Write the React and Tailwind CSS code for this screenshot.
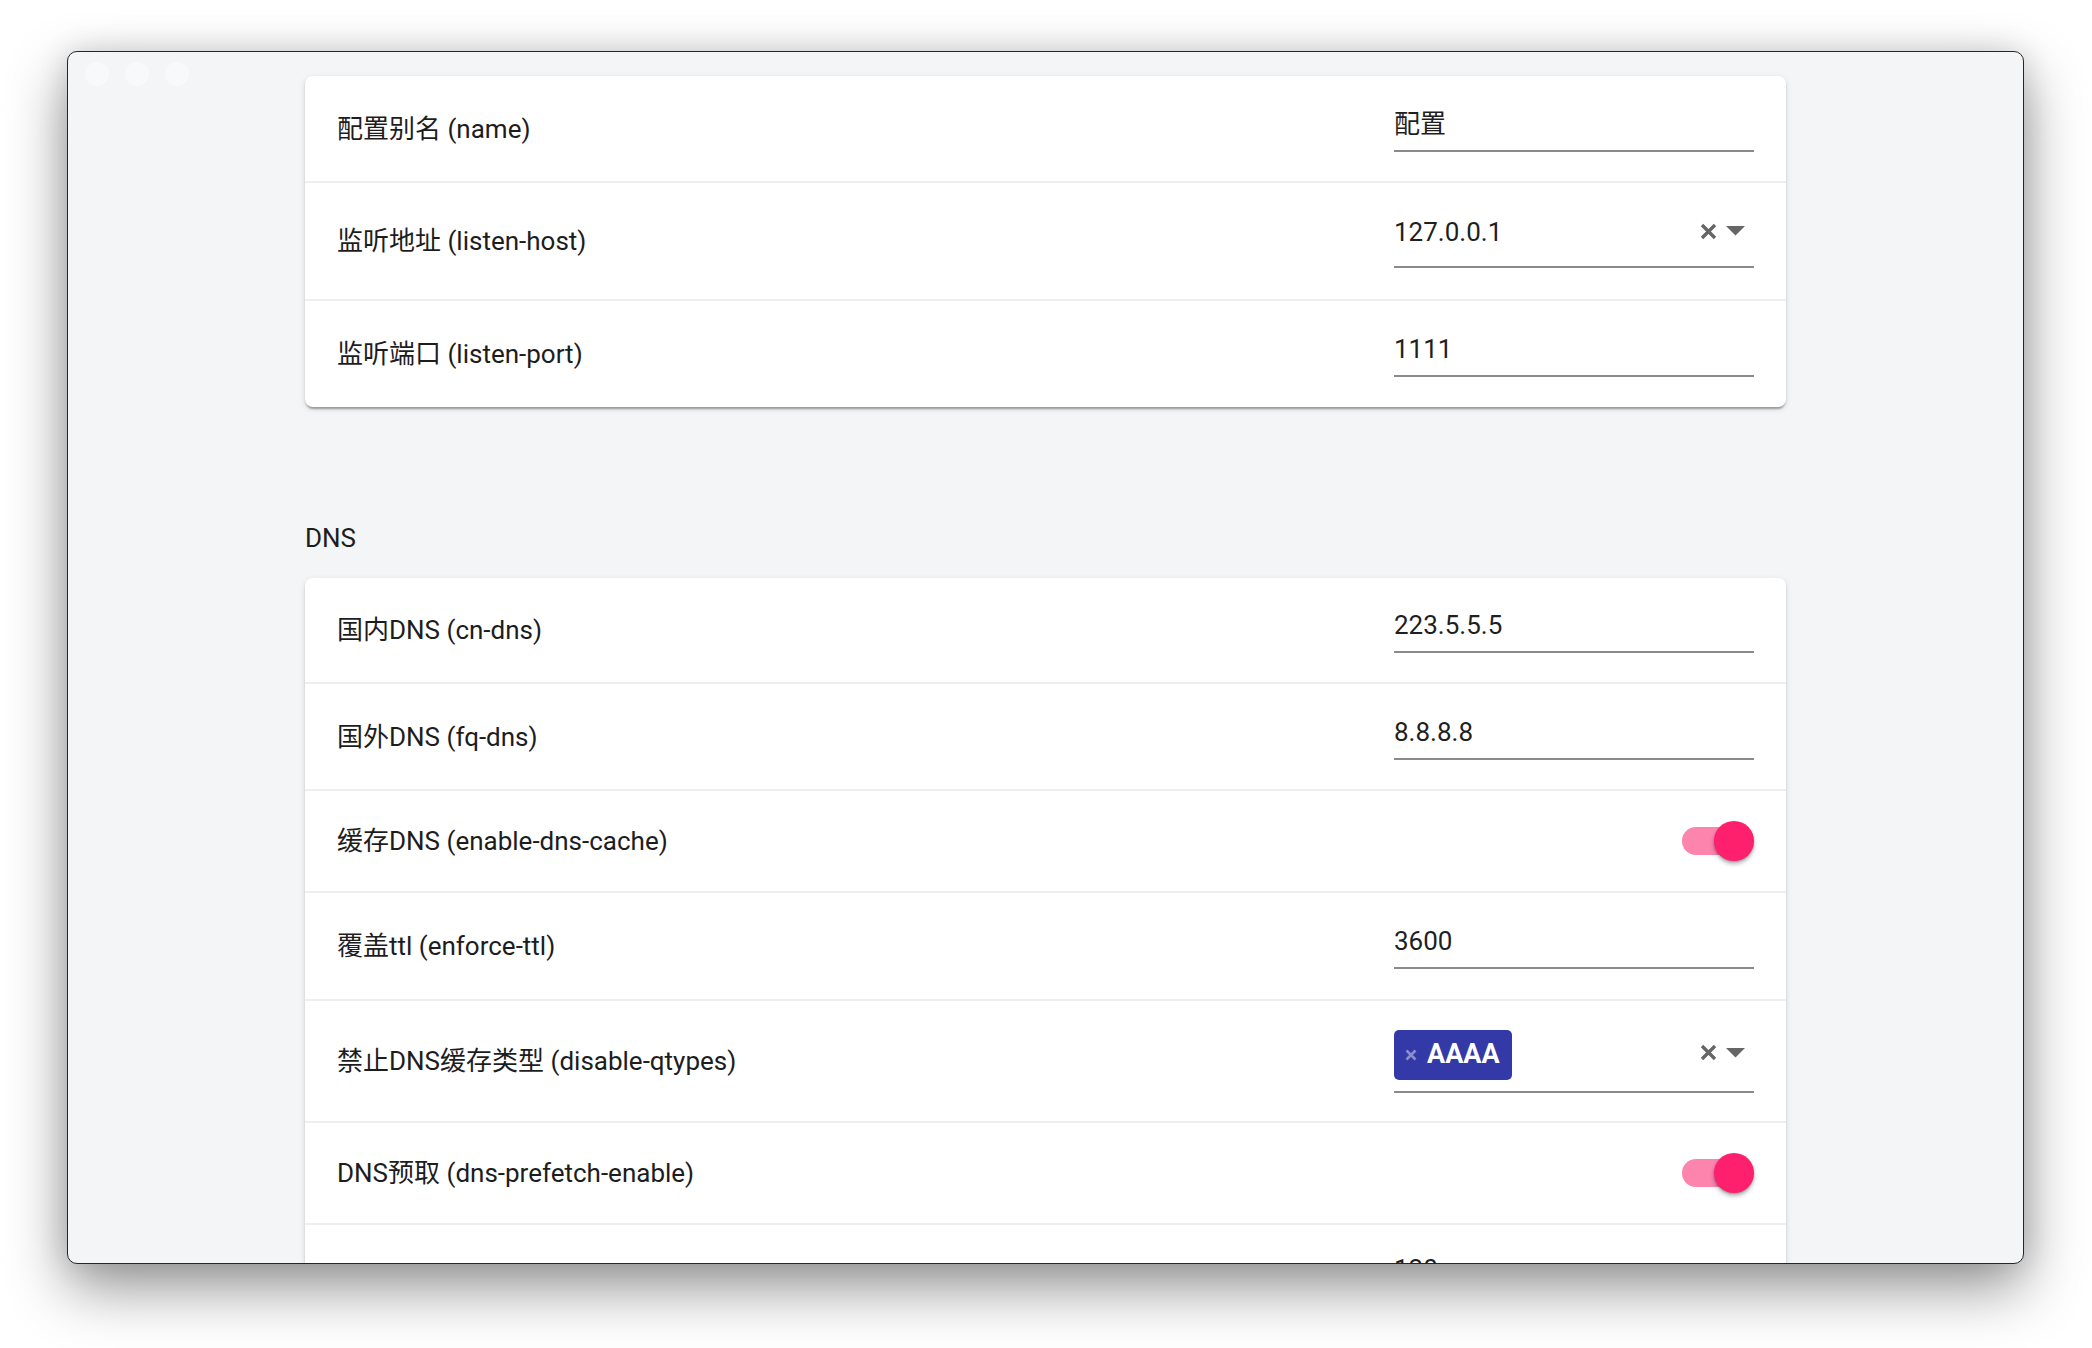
import React from "react";

const LABEL_FONT = { fontFamily: "Roboto, 'Noto Sans CJK SC', sans-serif" };

function ClearIcon() {
  return (
    <svg width="17" height="17" viewBox="0 0 17 17" className="block">
      <path d="M2 2 L15 15 M15 2 L2 15" stroke="#666666" strokeWidth="3.4" strokeLinecap="butt" />
    </svg>
  );
}

function Caret() {
  return (
    <svg width="19" height="10" viewBox="0 0 19 10" className="block">
      <path d="M0 0 L19 0 L9.5 9.5 Z" fill="#666666" />
    </svg>
  );
}

function TextInput({ value, pb = "pb-[8px]" }) {
  return (
    <div className={`w-[360px] border-b-2 border-[#8a8a8a] ${pb}`}>
      <div className="h-[36px] leading-[36px] text-[26px] text-[#1f1f1f]" style={LABEL_FONT}>
        {value}
      </div>
    </div>
  );
}

function AutoInput({ value }) {
  return (
    <div className="w-[360px] border-b-2 border-[#8a8a8a] pb-[16px]">
      <div className="flex h-[36px] items-center">
        <div className="flex-1 leading-[36px] text-[26px] text-[#1f1f1f]" style={LABEL_FONT}>
          {value}
        </div>
        <div className="flex items-center gap-[9px] pr-[9px] -mt-[2px]">
          <ClearIcon />
          <Caret />
        </div>
      </div>
    </div>
  );
}

function ChipInput() {
  return (
    <div className="w-[360px] border-b-2 border-[#8a8a8a] pb-[11px]">
      <div className="flex h-[50px] items-center">
        <div className="flex-1">
          <div className="inline-flex h-[50px] items-center rounded-[5px] bg-[#3339a7] pl-[11px] pr-[12px]">
            <svg width="12" height="12" viewBox="0 0 12 12" className="block">
              <path d="M1.5 1.5 L10.5 10.5 M10.5 1.5 L1.5 10.5" stroke="#8b8fd1" strokeWidth="2.6" />
            </svg>
            <span className="ml-[10px] text-[27px] font-bold leading-none text-white" style={{ fontFamily: "Roboto, sans-serif" }}>
              AAAA
            </span>
          </div>
        </div>
        <div className="flex items-center gap-[9px] pr-[9px] -mt-[4px]">
          <ClearIcon />
          <Caret />
        </div>
      </div>
    </div>
  );
}

function Switch() {
  return (
    <div className="relative h-[40px] w-[72px]">
      <div className="absolute left-0 top-[6px] h-[28px] w-[68px] rounded-full bg-[#fd84ad]" />
      <div className="absolute right-0 top-0 h-[40px] w-[40px] rounded-full bg-[#fe1f6d] shadow-[0_3px_4px_rgba(0,0,0,0.28),0_1px_2px_rgba(0,0,0,0.2)]" />
    </div>
  );
}

function Row({ label, h, last, children }) {
  return (
    <div
      className={`flex items-center justify-between pl-[32px] pr-[32px] ${last ? "" : "border-b-2 border-[#eeeeee]"}`}
      style={{ height: h }}
    >
      <div className="text-[26px] leading-[36px] text-[#1d1d1d]" style={LABEL_FONT}>
        {label}
      </div>
      {children}
    </div>
  );
}

const cardCls =
  "w-[1481px] rounded-[8px] bg-white shadow-[0_4px_2px_-2px_rgba(0,0,0,0.2),0_2px_2px_0_rgba(0,0,0,0.14),0_2px_6px_0_rgba(0,0,0,0.12)]";

export default function App() {
  return (
    <div className="h-[1348px] w-[2092px] overflow-hidden bg-white pl-[67px] pt-[51px]">
      <div className="relative h-[1213px] w-[1957px] overflow-hidden rounded-[10px] border border-[#262626] bg-[#f4f5f7] shadow-[0_24px_60px_rgba(0,0,0,0.42),0_0_30px_rgba(0,0,0,0.12)]">
        <div className="absolute left-[17px] top-[10px] flex gap-[16px]">
          <div className="h-[24px] w-[24px] rounded-full bg-[#f8f9fa]" />
          <div className="h-[24px] w-[24px] rounded-full bg-[#f8f9fa]" />
          <div className="h-[24px] w-[24px] rounded-full bg-[#f8f9fa]" />
        </div>

        <div className="px-[237px] pt-[24px]">
          <div className={cardCls}>
            <Row label="配置别名 (name)" h={107}>
              <TextInput value="配置" />
            </Row>
            <Row label="监听地址 (listen-host)" h={118}>
              <AutoInput value="127.0.0.1" />
            </Row>
            <Row label="监听端口 (listen-port)" h={106} last>
              <TextInput value="1111" />
            </Row>
          </div>

          <div className="mt-[113px] mb-[22px] h-[36px] text-[26px] leading-[36px] text-[#1d1d1d]" style={LABEL_FONT}>
            DNS
          </div>

          <div className={cardCls}>
            <Row label="国内DNS (cn-dns)" h={106}>
              <TextInput value="223.5.5.5" />
            </Row>
            <Row label="国外DNS (fq-dns)" h={107}>
              <TextInput value="8.8.8.8" />
            </Row>
            <Row label="缓存DNS (enable-dns-cache)" h={102}>
              <Switch />
            </Row>
            <Row label="覆盖ttl (enforce-ttl)" h={108}>
              <TextInput value="3600" />
            </Row>
            <Row label="禁止DNS缓存类型 (disable-qtypes)" h={122}>
              <ChipInput />
            </Row>
            <Row label="DNS预取 (dns-prefetch-enable)" h={102}>
              <Switch />
            </Row>
            <div className="flex h-[107px] justify-end pr-[32px] pt-[26px]">
              <TextInput value="120" />
            </div>
          </div>
        </div>
      </div>
    </div>
  );
}
